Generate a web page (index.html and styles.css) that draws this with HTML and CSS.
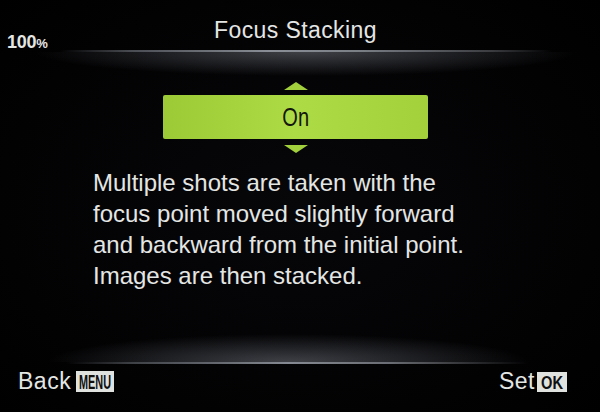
FILE: index.html
```html
<!DOCTYPE html>
<html lang="en">

<head>
    <meta charset="UTF-8">
    <meta name="viewport" content="width=device-width, initial-scale=1.0">
    <title>Focus Stacking</title>
    <link rel="stylesheet" href="styles.css">
</head>

<body>
    <div class="screen">
        <!-- Title bar -->
        <header class="top-bar">
            <span class="zoom-level">100<small>%</small></span>
            <h1 class="title">Focus Stacking</h1>
        </header>
        <div class="rule rule-top"></div>

        <!-- Setting picker + help text -->
        <main class="content">
            <div class="picker">
                <span class="arrow arrow-up"></span>
                <div class="option"><span>On</span></div>
                <span class="arrow arrow-down"></span>
            </div>
            <p class="description">
                Multiple shots are taken with the<br>
                focus point moved slightly forward<br>
                and backward from the initial point.<br>
                Images are then stacked.
            </p>
        </main>

        <div class="rule rule-bottom"></div>
        <!-- Button hints -->
        <footer class="bottom-bar">
            <span class="hint">Back
                <svg class="key" width="38" height="21" viewBox="0 0 38 21">
                    <rect width="38" height="21" />
                    <text x="19" y="17.5" textLength="32" lengthAdjust="spacingAndGlyphs">MENU</text>
                </svg>
            </span>
            <span class="hint">Set
                <svg class="key key-ok" width="30" height="20" viewBox="0 0 30 20">
                    <rect width="30" height="20" />
                    <text x="15" y="17" textLength="22" lengthAdjust="spacingAndGlyphs">OK</text>
                </svg>
            </span>
        </footer>
    </div>
</body>

</html>
```

FILE: styles.css
```css
* {
    box-sizing: border-box;
}

body {
    margin: 0;
    background-color: #000;
    color: #e4e6e4;
    font-family: 'Liberation Sans', Arial, sans-serif;
}

.screen {
    width: 600px;
    height: 412px;
    display: flex;
    flex-direction: column;
    background: radial-gradient(ellipse 420px 300px at 50% 50%, #07070a, #000);
}

/* Title bar */
.top-bar {
    height: 50px;
    display: grid;
    grid-template-columns: 1fr auto 1fr;
    align-items: start;
    padding-right: 9px;
}

.zoom-level {
    margin-top: 33px;
    padding-left: 7px;
    font-size: 18px;
    line-height: 18px;
    font-weight: bold;
    letter-spacing: -0.3px;
}

.zoom-level small {
    font-size: 13px;
    letter-spacing: 0;
}

.title {
    margin: 18px 0 0;
    font-size: 23px;
    line-height: 24px;
    font-weight: normal;
    letter-spacing: 0.4px;
}

/* Separator lines */
.rule {
    height: 2px;
    flex-shrink: 0;
}

.rule-top {
    background: linear-gradient(to right, transparent 10%, #4a4d53 22%, #8a8e96 45%, #7a7e85 60%, #3a3c40 82%, transparent 92%);
}

.rule-bottom {
    background: linear-gradient(to right, transparent 11%, #3e4146 22%, #858991 48%, #6a6d73 65%, transparent 88%);
}

/* Picker + help text */
.content {
    flex: 1;
    padding: 30px 9px 0 0;
    background:
        radial-gradient(ellipse 270px 24px at 51% 0, rgba(120, 124, 134, 0.5), transparent),
        radial-gradient(ellipse 240px 28px at 48% 100%, rgba(110, 114, 124, 0.55), transparent);
}

.picker {
    display: flex;
    flex-direction: column;
    align-items: center;
}

.arrow {
    width: 0;
    height: 0;
    border-left: 12px solid transparent;
    border-right: 12px solid transparent;
}

.arrow-up {
    border-bottom: 8px solid #a2cf3c;
    margin-bottom: 5px;
}

.arrow-down {
    border-top: 8px solid #a2cf3c;
    margin-top: 6px;
}

.option {
    width: 265px;
    height: 44px;
    display: flex;
    justify-content: center;
    align-items: center;
    border-radius: 2px;
    background: linear-gradient(to right, #9cca36, #addb45 50%, #a3d13c);
    color: #14160e;
    font-size: 25px;
}

.option span {
    display: inline-block;
    transform: scaleX(0.8);
}

.description {
    margin: 14px 0 0 93px;
    font-size: 24px;
    line-height: 31px;
}

/* Button hints */
.bottom-bar {
    height: 48px;
    display: flex;
    justify-content: space-between;
    align-items: flex-start;
    padding: 5px 33px 0 18px;
}

.hint {
    display: flex;
    align-items: flex-end;
    gap: 5px;
    font-size: 23px;
    line-height: 24px;
    letter-spacing: 0.5px;
}

.key {
    display: block;
    margin-bottom: 1px;
}

.key rect {
    fill: #dfe2df;
}

.key text {
    fill: #101010;
    font-family: 'Liberation Sans', Arial, sans-serif;
    font-size: 21px;
    font-weight: bold;
    letter-spacing: 0;
    text-anchor: middle;
}

.key-ok {
    margin-left: -3px;
}

.key-ok text {
    font-size: 19px;
}
```
